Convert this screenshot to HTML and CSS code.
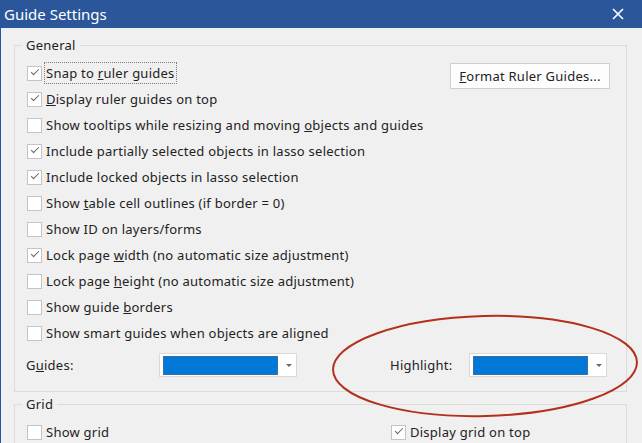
FILE: index.html
```html
<!DOCTYPE html>
<html lang="en">
<head>
  <meta charset="UTF-8">
  <title>Guide Settings</title>
  <link rel="stylesheet" href="styles.css">
</head>
<body>
  <div class="window">
    <div class="titlebar">
      <span>Guide Settings</span>
      <svg class="close" width="12" height="12" viewBox="0 0 12 12">
        <path d="M1 1 L11 11 M11 1 L1 11" stroke="#fff" stroke-width="1.6" fill="none"/>
      </svg>
    </div>

    <div class="content">
      <fieldset class="group">
        <legend>General</legend>
        <div class="general-top">
          <div class="rows">
            <div class="row"><span class="box checked"></span><span class="label focus">Snap to <u>r</u>uler guides</span></div>
            <div class="row"><span class="box checked"></span><span class="label"><u>D</u>isplay ruler guides on top</span></div>
            <div class="row"><span class="box"></span><span class="label">Show tooltips while resizing and moving <u>o</u>bjects and guides</span></div>
            <div class="row"><span class="box checked"></span><span class="label">Include partially selected objects in lasso selection</span></div>
            <div class="row"><span class="box checked"></span><span class="label">Include locked objects in lasso selection</span></div>
            <div class="row"><span class="box"></span><span class="label">Show <u>t</u>able cell outlines (if border = 0)</span></div>
            <div class="row"><span class="box"></span><span class="label">Show ID on layers/forms</span></div>
            <div class="row"><span class="box checked"></span><span class="label">Lock page <u>w</u>idth (no automatic size adjustment)</span></div>
            <div class="row"><span class="box"></span><span class="label">Lock page <u>h</u>eight (no automatic size adjustment)</span></div>
            <div class="row"><span class="box"></span><span class="label">Show guide <u>b</u>orders</span></div>
            <div class="row"><span class="box"></span><span class="label">Show smart guides when objects are aligned</span></div>
          </div>
          <button class="btn" type="button"><u>F</u>ormat Ruler Guides...</button>
        </div>

        <div class="colors">
          <div class="color-item">
            <span class="color-label">G<u>u</u>ides:</span>
            <div class="picker"><span class="swatch"></span><span class="arrow"></span></div>
          </div>
          <div class="color-item right">
            <span class="color-label short">Highlight:</span>
            <div class="picker"><span class="swatch"></span><span class="arrow"></span></div>
          </div>
        </div>
      </fieldset>

      <fieldset class="group grid-group">
        <legend>Grid</legend>
        <div class="grid-rows">
          <div class="row half"><span class="box"></span><span class="label">Show grid</span></div>
          <div class="row"><span class="box checked"></span><span class="label">Display grid on top</span></div>
        </div>
      </fieldset>
    </div>
  </div>

  <svg class="mark" width="642" height="443" viewBox="0 0 642 443">
    <ellipse cx="485" cy="366" rx="152" ry="50" transform="rotate(-1.5 485 366)" fill="none" stroke="#b3301c" stroke-width="2"/>
  </svg>
</body>
</html>
```

FILE: styles.css
```css
body {
  margin: 0;
  width: 642px;
  height: 443px;
  overflow: hidden;
  background: #f0f0f0;
  font-family: "Noto Sans", "Open Sans", sans-serif;
  font-size: 13px;
  letter-spacing: 0.25px;
  color: #222;
  position: relative;
}

.window {
  border-left: 1px solid #2b579a;
  height: 443px;
  box-sizing: border-box;
}

.titlebar {
  height: 28px;
  background: #2b579a;
  color: #fff;
  display: flex;
  align-items: center;
  justify-content: space-between;
  padding: 0 18px 0 3px;
  font-size: 15px;
  letter-spacing: 0;
}

.close {
  display: block;
}

.content {
  padding: 8px 15px 0 13px;
}

.group {
  margin: 0;
  padding: 0 0 13px 0;
  border: 1px solid #dcdcdc;
  min-width: 0;
}

.group legend {
  margin-left: 7px;
  padding: 0 4px;
  line-height: 18px;
}

.general-top {
  display: flex;
  justify-content: space-between;
  padding-top: 6px;
}

.rows {
  padding-left: 12px;
}

.row {
  height: 26px;
  display: flex;
  align-items: center;
}

.box {
  width: 13px;
  height: 13px;
  border: 1px solid #c4c4c4;
  background: #fff;
  margin-right: 2px;
  position: relative;
  flex: none;
}

.box.checked::after {
  content: "";
  position: absolute;
  left: 3px;
  top: 2px;
  width: 7px;
  height: 3px;
  border-left: 1.7px solid #626262;
  border-bottom: 1.7px solid #626262;
  transform: rotate(-45deg);
}

.label {
  white-space: nowrap;
  padding: 1px;
  border: 1px solid transparent;
}

.label.focus {
  border: 1px dotted #7a7a7a;
}

.btn {
  align-self: flex-start;
  margin: 3px 16px 0 0;
  width: 160px;
  height: 26px;
  background: #fdfdfd;
  border: 1px solid #cfcfcf;
  font-family: inherit;
  font-size: 13px;
  letter-spacing: 0.25px;
  color: #222;
  padding: 0;
}

.colors {
  display: flex;
  margin-top: 6px;
  padding-left: 11px;
}

.color-item {
  display: flex;
  align-items: center;
  height: 26px;
}

.color-item.right {
  margin-left: 93px;
}

.color-label {
  width: 133px;
}

.color-label.short {
  width: 79px;
}

.picker {
  width: 138px;
  height: 24px;
  background: #fff;
  border: 1px solid #d9d9d9;
  display: flex;
  align-items: center;
  padding-left: 3px;
  box-sizing: border-box;
}

.swatch {
  width: 115px;
  height: 19px;
  background: #0078d7;
  border: 1px solid #3f6f9f;
  box-sizing: border-box;
}

.arrow {
  margin-left: 8px;
  width: 0;
  height: 0;
  border-left: 3px solid transparent;
  border-right: 3px solid transparent;
  border-top: 3px solid #6a6a6a;
}

.grid-group {
  margin-top: 3px;
}

.grid-rows {
  display: flex;
  padding: 6px 0 0 12px;
}

.row.half {
  width: 364px;
}

.mark {
  position: absolute;
  left: 0;
  top: 0;
  pointer-events: none;
}
```
